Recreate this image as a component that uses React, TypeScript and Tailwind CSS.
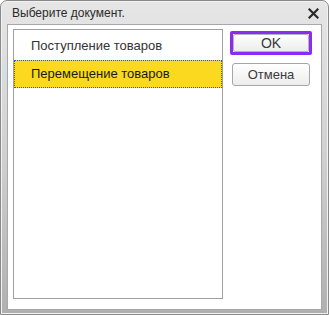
export default function App() {
  const items = ["Поступление товаров", "Перемещение товаров"];
  const selected = 1;

  return (
    <div className="relative w-[329px] h-[315px] bg-white overflow-hidden font-['Liberation_Sans',Arial,sans-serif]">
      {/* window frame */}
      <div className="flex h-full flex-col rounded-t-[7px] border border-[#8a8a8a] bg-gradient-to-b from-[#e6e6e6] via-[#d0d0d0] to-[#b0b0b0] shadow-[inset_0_0_0_1px_#f2f2f2]">
        {/* title bar */}
        <div className="flex h-[23px] shrink-0 items-center justify-between pl-[11px] pr-[9px] pt-[1px]">
          <span className="text-[12px] text-[#2a2a2a]">Выберите документ.</span>
          <svg width="11" height="11" viewBox="0 0 11 11" className="mt-[1px]">
            <path d="M1.5 1.5 L9.5 9.5 M9.5 1.5 L1.5 9.5" stroke="#2b2b2b" strokeWidth="2.2" strokeLinecap="square" />
          </svg>
        </div>

        {/* client area */}
        <div className="mx-[6px] mb-[4px] flex flex-1 gap-[7px] border border-[#a8a8a8] bg-white pl-[5px] pr-[9px] pt-[4px] pb-[10px]">
          {/* list */}
          <div className="flex w-[210px] flex-col border border-[#a0a0a0] pt-[2px]">
            {items.map((item, i) => (
              <div
                key={item}
                className={
                  i === selected
                    ? "flex h-[28px] items-center border border-dotted border-[#3a55c8] bg-[#fbd91f] pl-[16px] text-[13px] text-[#1a1a1a]"
                    : "flex h-[28px] items-center border border-transparent pl-[16px] text-[13px] text-[#333333]"
                }
              >
                {item}
              </div>
            ))}
          </div>

          {/* buttons */}
          <div className="flex flex-col gap-[8px] pt-[2px]">
            <div className="h-[24px] w-[82px] rounded-[2px] border-[3px] border-[#8b2cf5]">
              <button className="flex h-full w-full items-center justify-center rounded-[2px] border border-[#b5b5b5] bg-gradient-to-b from-white to-[#ececec] text-[14px] text-[#3a3a3a]">
                OK
              </button>
            </div>
            <button className="ml-[2px] flex h-[23px] w-[78px] items-center justify-center rounded-[3px] border border-[#a6a6a6] bg-gradient-to-b from-white to-[#ededed] text-[13px] text-[#3a3a3a]">
              Отмена
            </button>
          </div>
        </div>
      </div>
    </div>
  );
}
